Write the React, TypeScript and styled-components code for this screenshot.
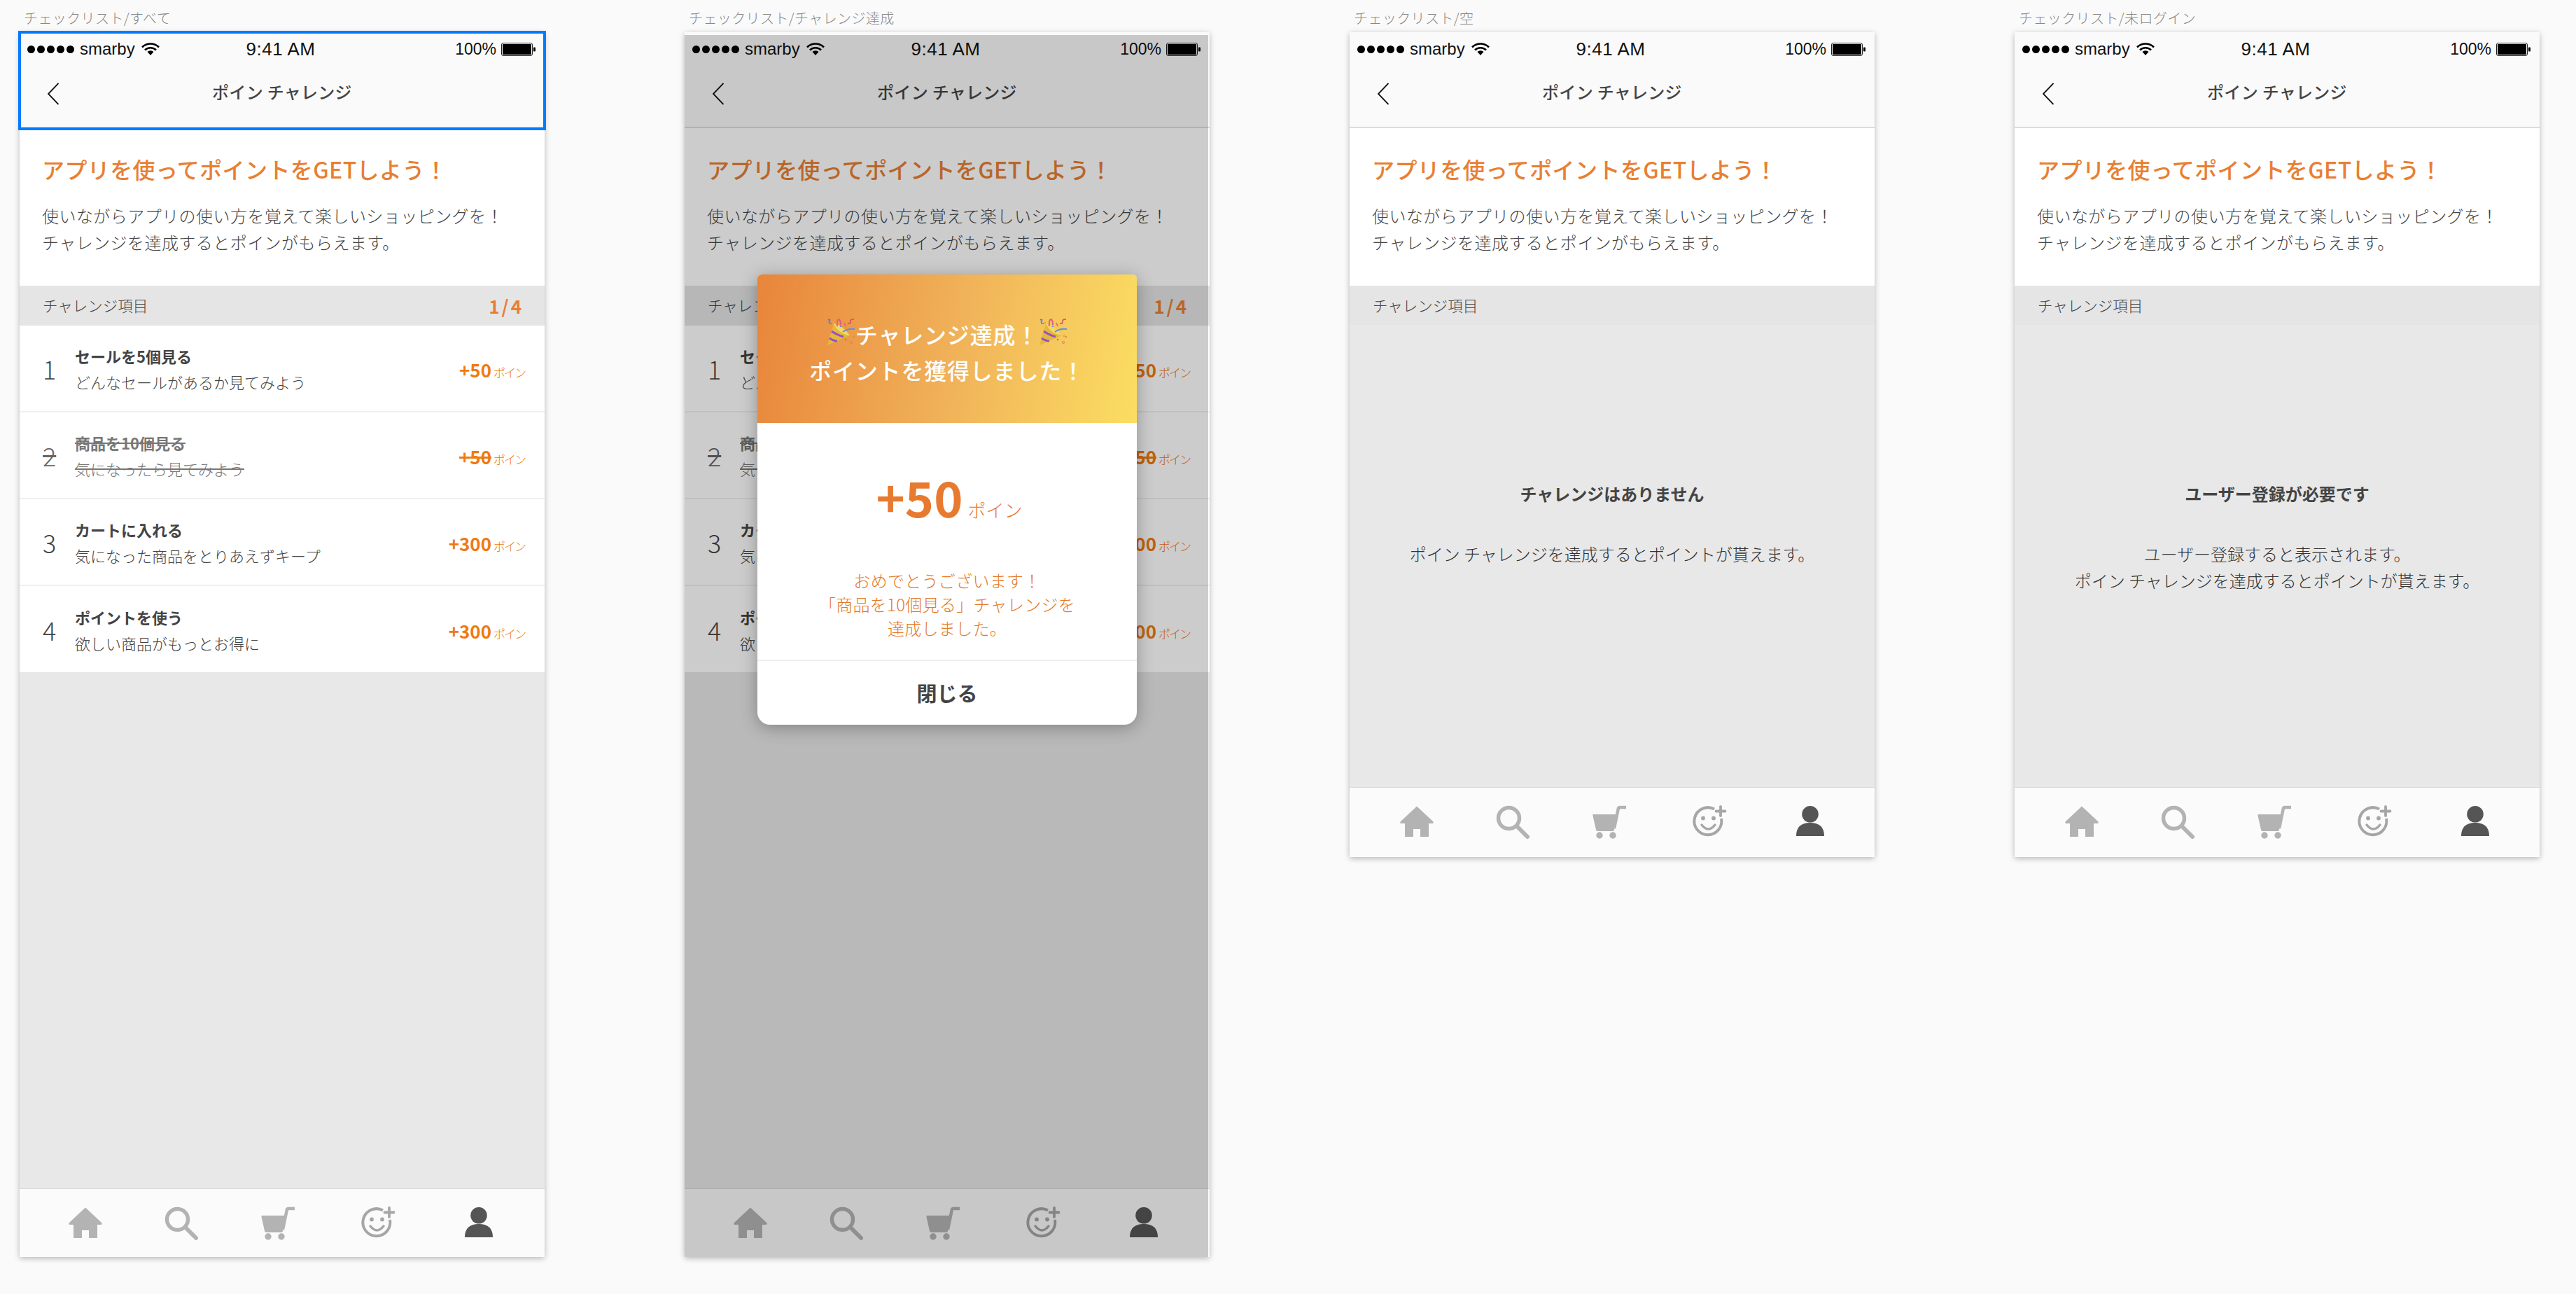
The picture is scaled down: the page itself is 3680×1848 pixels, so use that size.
import styled, { createGlobalStyle } from "styled-components";

const cjk = `"Noto Sans CJK JP", "Noto Sans", sans-serif`;

const challenges = [
  { no: 1, title: "セールを5個見る", sub: "どんなセールがあるか見てみよう", points: 50, done: false },
  { no: 2, title: "商品を10個見る", sub: "気になったら見てみよう", points: 50, done: true },
  { no: 3, title: "カートに入れる", sub: "気になった商品をとりあえずキープ", points: 300, done: false },
  { no: 4, title: "ポイントを使う", sub: "欲しい商品がもっとお得に", points: 300, done: false },
];

export default function App() {
  return (
    <Page>
      <GlobalStyle />
      <Screen label="チェックリスト/すべて" selected>
        <ChallengeList />
      </Screen>
      <Screen label="チェックリスト/チャレンジ達成" dimmed>
        <ChallengeList />
      </Screen>
      <Screen label="チェックリスト/空" short>
        <Section />
        <Empty>
          <EmptyTitle>チャレンジはありません</EmptyTitle>
          <EmptyText>ポイン チャレンジを達成するとポイントが貰えます。</EmptyText>
        </Empty>
      </Screen>
      <Screen label="チェックリスト/未ログイン" short>
        <Section />
        <Empty>
          <EmptyTitle>ユーザー登録が必要です</EmptyTitle>
          <EmptyText>
            ユーザー登録すると表示されます。
            <br />
            ポイン チャレンジを達成するとポイントが貰えます。
          </EmptyText>
        </Empty>
      </Screen>
    </Page>
  );
}

function Screen(props: {
  label: string;
  selected?: boolean;
  dimmed?: boolean;
  short?: boolean;
  children: React.ReactNode;
}) {
  return (
    <Column>
      <Label>{props.label}</Label>
      <Phone $short={props.short}>
        <StatusBar>
          <Carrier>
            <Dots>
              <i />
              <i />
              <i />
              <i />
              <i />
            </Dots>
            smarby
            <WifiIcon />
          </Carrier>
          <Clock>9:41 AM</Clock>
          <Battery>
            100%
            <BatteryIcon />
          </Battery>
        </StatusBar>
        <Nav>
          <BackIcon />
          <NavTitle>ポイン チャレンジ</NavTitle>
        </Nav>
        <Hero>
          <HeroTitle>アプリを使ってポイントをGETしよう！</HeroTitle>
          <HeroText>
            使いながらアプリの使い方を覚えて楽しいショッピングを！
            <br />
            チャレンジを達成するとポインがもらえます。
          </HeroText>
        </Hero>
        {props.children}
        <TabBar $short={props.short}>
          <HomeIcon />
          <SearchIcon />
          <CartIcon />
          <SmileIcon />
          <PersonIcon />
        </TabBar>
        {props.dimmed && (
          <>
            <Dim />
            <Modal />
          </>
        )}
        {props.selected && <SelectBox />}
      </Phone>
    </Column>
  );
}

function Section(props: { count?: string }) {
  return (
    <SectionBar>
      <span>チャレンジ項目</span>
      {props.count && <Count>{props.count}</Count>}
    </SectionBar>
  );
}

function ChallengeList() {
  return (
    <>
      <Section count="1/4" />
      <List>
        {challenges.map((c) => (
          <Row key={c.no}>
            <RowNo $done={c.done}>{c.no}</RowNo>
            <RowBody>
              <RowTitle $done={c.done}>{c.title}</RowTitle>
              <RowSub $done={c.done}>{c.sub}</RowSub>
            </RowBody>
            <Points>
              <PointValue $done={c.done}>+{c.points}</PointValue>
              <PointUnit>ポイン</PointUnit>
            </Points>
          </Row>
        ))}
      </List>
      <Filler />
    </>
  );
}

function Modal() {
  return (
    <Dialog>
      <DialogHead>
        <HeadLine>
          <Popper />
          チャレンジ達成！
          <Popper />
        </HeadLine>
        <HeadLine>ポイントを獲得しました！</HeadLine>
      </DialogHead>
      <DialogBody>
        <Amount>
          <b>+50</b>
          <span>ポイン</span>
        </Amount>
        <Message>
          おめでとうございます！
          <br />
          「商品を10個見る」チャレンジを
          <br />
          達成しました。
        </Message>
      </DialogBody>
      <CloseButton>閉じる</CloseButton>
    </Dialog>
  );
}

function Popper() {
  return (
    <PopperSvg viewBox="0 0 41 40">
      <path d="M1 39 L10 8 Q22 10 33 25 Z" fill="#e3b93c" />
      <path d="M10 8 Q22 10 33 25 Q22 24 14 15 Z" fill="#f3d868" />
      <path d="M7 19 Q14 24 24 27 M4 29 Q10 33 15 33" stroke="#9a4fc6" strokeWidth="3" fill="none" />
      <path d="M23 20 Q30 15 40 16" stroke="#5f8fe0" strokeWidth="2" fill="none" />
      <path d="M2 3 Q6 1 4 5 Q2 8 7 8" stroke="#4f79d6" strokeWidth="1.6" fill="none" />
      <path d="M15 12 Q14 2 18 2 Q20 4 20 10" stroke="#e2607a" strokeWidth="2" fill="none" />
      <path d="M30 8 Q35 8 34 5 Q33 2 39 2" stroke="#d94f62" strokeWidth="1.6" fill="none" />
      <path d="M25 7 L27 12" stroke="#e2607a" strokeWidth="1.6" />
      <circle cx="9" cy="7" r="1.2" fill="#e0a83c" />
      <circle cx="36" cy="26" r="1.4" fill="#e0a83c" />
      <circle cx="39" cy="27" r="1.2" fill="#e2874c" />
      <circle cx="35" cy="35" r="1.6" fill="none" stroke="#e2874c" />
      <circle cx="27" cy="31" r="1.3" fill="#5f8fe0" />
      <circle cx="20" cy="12" r="1.2" fill="#5f8fe0" />
    </PopperSvg>
  );
}

function WifiIcon() {
  return (
    <Wifi viewBox="0 0 26 18">
      <path d="M1 6.5 A17 17 0 0 1 25 6.5 M5 10.5 A11.5 11.5 0 0 1 21 10.5" stroke="#000" strokeWidth="2.6" fill="none" />
      <path d="M8.5 13 A6.5 6.5 0 0 1 17.5 13 L13 18 Z" fill="#000" />
    </Wifi>
  );
}

function BatteryIcon() {
  return (
    <BatterySvg viewBox="0 0 49 19">
      <rect x="0.5" y="0.5" width="44" height="18" rx="2.5" fill="none" stroke="#222" />
      <rect x="2" y="2" width="41" height="15" rx="1" fill="#000" />
      <rect x="46" y="6.5" width="3" height="6" rx="1" fill="#000" />
    </BatterySvg>
  );
}

function BackIcon() {
  return (
    <Back viewBox="0 0 16 32">
      <path d="M15.5 1 L1 16 L15.5 31" stroke="#111" strokeWidth="1.8" fill="none" />
    </Back>
  );
}

function HomeIcon() {
  return (
    <TabIcon $w={48} $h={44} $ml={0} viewBox="0 0 48 44">
      <path d="M24 0.5 L47 22 Q49 25 46 25 H41 V44 H29 V33 H19 V44 H7 V25 H2 Q-1 25 1 22 Z" fill="#b3b3b3" />
    </TabIcon>
  );
}

function SearchIcon() {
  return (
    <TabIcon $w={47} $h={47} $ml={90} viewBox="0 0 47 47">
      <circle cx="17.5" cy="17.5" r="15" stroke="#b3b3b3" strokeWidth="5.5" fill="none" />
      <path d="M29 29 L44 44" stroke="#b3b3b3" strokeWidth="6" strokeLinecap="round" />
    </TabIcon>
  );
}

function CartIcon() {
  return (
    <TabIcon $w={48} $h={47} $ml={90} viewBox="0 0 48 47">
      <path d="M1.5 12 H34 Q36 12 35.5 14 L31 34 Q30.5 36 29 36 H7 Q5.5 36 5 34 L0.5 14 Q0 12 1.5 12 Z" fill="#b3b3b3" />
      <path d="M31 32 L37 3 Q37.5 2 39 2 H48" stroke="#b3b3b3" strokeWidth="4.5" fill="none" />
      <circle cx="10" cy="42" r="4.7" fill="#b3b3b3" />
      <circle cx="29" cy="42" r="4.7" fill="#b3b3b3" />
    </TabIcon>
  );
}

function SmileIcon() {
  return (
    <TabIcon $w={47} $h={43} $ml={95} viewBox="0 0 47 43">
      <path d="M31 4.5 A19.5 19.5 0 1 0 41 18" stroke="#a6a6a6" strokeWidth="4" fill="none" />
      <circle cx="15" cy="17.5" r="2.9" fill="#a6a6a6" />
      <circle cx="30" cy="17.5" r="2.9" fill="#a6a6a6" />
      <path d="M13 27 Q22.5 39 32 27" stroke="#a6a6a6" strokeWidth="3.5" fill="none" strokeLinecap="round" />
      <path d="M40 1 V14 M33.5 7.5 H46.5" stroke="#a6a6a6" strokeWidth="3.8" strokeLinecap="round" />
    </TabIcon>
  );
}

function PersonIcon() {
  return (
    <TabIcon $w={40} $h={43} $ml={101} viewBox="0 0 40 43">
      <circle cx="20" cy="11.8" r="11.8" fill="#555" />
      <path d="M0 43 Q0 24 20 24 Q40 24 40 43 Z" fill="#555" />
    </TabIcon>
  );
}

const GlobalStyle = createGlobalStyle`
  html, body {
    margin: 0;
    background: #fafafa;
  }
  body {
    font-family: ${cjk};
  }
`;

const Page = styled.div`
  display: flex;
  gap: 200px;
  width: 3680px;
  height: 1848px;
  padding-left: 28px;
  box-sizing: border-box;
  background: #fafafa;
`;

const Column = styled.div`
  width: 750px;
`;

const Label = styled.div`
  height: 46px;
  padding: 12px 0 0 6px;
  box-sizing: border-box;
  font-size: 20px;
  line-height: 28px;
  font-weight: 300;
  letter-spacing: 0.4px;
  color: #888;
  white-space: nowrap;
`;

const Phone = styled.div<{ $short?: boolean }>`
  position: relative;
  display: flex;
  flex-direction: column;
  width: 750px;
  height: ${(p) => (p.$short ? 1178 : 1749)}px;
  background: #e8e8e8;
  box-shadow: 0 2px 8px rgba(0, 0, 0, 0.28);
`;

const StatusBar = styled.div`
  display: grid;
  grid-template-columns: 1fr auto 1fr;
  align-items: center;
  height: 48px;
  padding: 0 13px 0 11px;
  background: #fafafa;
  font-family: "Liberation Sans", sans-serif;
  color: #111;
`;

const Carrier = styled.div`
  display: flex;
  align-items: center;
  font-size: 24px;
`;

const Dots = styled.span`
  display: flex;
  gap: 3px;
  margin-right: 8px;

  i {
    width: 11px;
    height: 11px;
    border-radius: 50%;
    background: #000;
  }
`;

const Wifi = styled.svg`
  width: 26px;
  height: 18px;
  margin-left: 9px;
`;

const Clock = styled.div`
  font-size: 26px;
  letter-spacing: 0.5px;
  margin-left: -2px;
`;

const Battery = styled.div`
  display: flex;
  align-items: center;
  justify-content: flex-end;
  gap: 7px;
  font-size: 23px;
`;

const BatterySvg = styled.svg`
  width: 49px;
  height: 19px;
`;

const Nav = styled.div`
  position: relative;
  display: flex;
  align-items: center;
  justify-content: center;
  height: 89px;
  padding-bottom: 15px;
  box-sizing: border-box;
  background: #fafafa;
  border-bottom: 2px solid #dcdcdc;
`;

const Back = styled.svg`
  position: absolute;
  left: 40px;
  top: 24px;
  width: 16px;
  height: 32px;
`;

const NavTitle = styled.div`
  font-size: 24px;
  font-weight: 500;
  letter-spacing: 0.3px;
  color: #444;
`;

const Hero = styled.div`
  height: 225px;
  padding: 36px 33px 0 32px;
  box-sizing: border-box;
  background: #fff;
`;

const HeroTitle = styled.div`
  font-size: 32px;
  line-height: 44px;
  font-weight: 500;
  letter-spacing: 0.4px;
  color: #e87f33;
`;

const HeroText = styled.div`
  margin-top: 26px;
  font-size: 24px;
  line-height: 38px;
  font-weight: 300;
  letter-spacing: 0.45px;
  color: #444;
  white-space: nowrap;
`;

const SectionBar = styled.div`
  display: flex;
  align-items: center;
  justify-content: space-between;
  height: 57px;
  padding: 0 33px 3px;
  box-sizing: border-box;
  background: #e5e5e5;
  font-size: 21.5px;
  font-weight: 300;
  color: #444;
`;

const Count = styled.span`
  font-size: 26px;
  font-weight: 700;
  letter-spacing: 3px;
  margin: 3px -3px 0 0;
  color: #e87f33;
`;

const List = styled.div`
  background: #fff;
`;

const Row = styled.div`
  display: flex;
  align-items: center;
  height: 124px;
  padding: 0 28px 0 33px;
  box-sizing: border-box;
  border-bottom: 2px solid #f0f0f0;

  &:last-child {
    height: 123px;
    border-bottom: 0;
  }
`;

const RowNo = styled.div<{ $done?: boolean }>`
  width: 46px;
  flex: none;
  font-size: 36px;
  font-weight: 300;
  color: ${(p) => (p.$done ? "#666" : "#444")};
  text-decoration: ${(p) => (p.$done ? "line-through" : "none")};
`;

const RowBody = styled.div`
  flex: 1;
  padding-top: 2px;
`;

const RowTitle = styled.div<{ $done?: boolean }>`
  font-size: 22px;
  line-height: 37px;
  font-weight: 700;
  color: ${(p) => (p.$done ? "#777" : "#444")};
  text-decoration: ${(p) => (p.$done ? "line-through" : "none")};
`;

const RowSub = styled.div<{ $done?: boolean }>`
  font-size: 22px;
  line-height: 37px;
  font-weight: 300;
  color: ${(p) => (p.$done ? "#777" : "#444")};
  text-decoration: ${(p) => (p.$done ? "line-through" : "none")};
`;

const Points = styled.div`
  display: flex;
  align-items: baseline;
  gap: 3px;
  padding-top: 3px;
  color: #f07a10;
`;

const PointValue = styled.b<{ $done?: boolean }>`
  font-size: 26px;
  font-weight: 700;
  text-decoration: ${(p) => (p.$done ? "line-through" : "none")};
  text-decoration-thickness: 3px;
`;

const PointUnit = styled.span`
  font-size: 17px;
  font-weight: 300;
  letter-spacing: -2px;
`;

const Filler = styled.div`
  flex: 1;
`;

const Empty = styled.div`
  flex: 1;
  padding-top: 221px;
  text-align: center;
  border-top: 1px solid #eee;
`;

const EmptyTitle = styled.div`
  font-size: 24px;
  line-height: 36px;
  font-weight: 700;
  color: #444;
`;

const EmptyText = styled.div`
  margin-top: 49px;
  font-size: 24px;
  line-height: 37.5px;
  font-weight: 300;
  color: #333;
`;

const TabBar = styled.div<{ $short?: boolean }>`
  display: flex;
  align-items: flex-start;
  height: ${(p) => (p.$short ? 100 : 98)}px;
  padding: 26px 0 0 ${(p) => (p.$short ? 72 : 70)}px;
  box-sizing: border-box;
  background: #fbfbfb;
  border-top: 1px solid #d9d9d9;
`;

const TabIcon = styled.svg<{ $w: number; $h: number; $ml: number }>`
  flex: none;
  width: ${(p) => p.$w}px;
  height: ${(p) => p.$h}px;
  margin-left: ${(p) => p.$ml}px;
  overflow: visible;
`;

const SelectBox = styled.div`
  position: absolute;
  top: -2px;
  left: -2px;
  right: -2px;
  height: 134px;
  border: 4px solid #007aff;
`;

const Dim = styled.div`
  position: absolute;
  top: 4px;
  left: 0;
  right: 2px;
  bottom: 0;
  background: rgba(0, 0, 0, 0.2);
`;

const Dialog = styled.div`
  position: absolute;
  top: 346px;
  left: 104px;
  width: 542px;
  height: 643px;
  display: flex;
  flex-direction: column;
  background: #fff;
  border-radius: 6px 6px 18px 18px;
  box-shadow: 0 4px 24px rgba(0, 0, 0, 0.3);
  overflow: hidden;
`;

const DialogHead = styled.div`
  display: flex;
  flex-direction: column;
  justify-content: center;
  height: 212px;
  padding-top: 8px;
  box-sizing: border-box;
  background: linear-gradient(100deg, #e8853a 0%, #f0b058 50%, #fbde62 100%);
  color: #fff;
  font-size: 32px;
  font-weight: 500;
  letter-spacing: 0.8px;
`;

const HeadLine = styled.div`
  display: flex;
  align-items: center;
  justify-content: center;
  height: 51px;
  white-space: nowrap;
`;

const PopperSvg = styled.svg`
  width: 41px;
  height: 40px;
  flex: none;
  margin-top: -6px;
`;

const DialogBody = styled.div`
  flex: 1;
  padding-top: 60px;
  text-align: center;
`;

const Amount = styled.div`
  display: flex;
  align-items: baseline;
  justify-content: center;
  gap: 7px;
  height: 90px;
  padding-left: 6px;
  line-height: 90px;
  color: #e87a30;

  b {
    font-size: 70px;
    font-weight: 700;
  }
  span {
    font-size: 26px;
    font-weight: 300;
  }
`;

const Message = styled.div`
  margin-top: 58px;
  font-size: 24px;
  line-height: 34px;
  font-weight: 300;
  letter-spacing: 0.3px;
  color: #e57a28;
`;

const CloseButton = styled.div`
  height: 93px;
  box-sizing: border-box;
  border-top: 2px solid #eee;
  text-align: center;
  font-size: 29px;
  line-height: 91px;
  font-weight: 700;
  color: #444;
`;
